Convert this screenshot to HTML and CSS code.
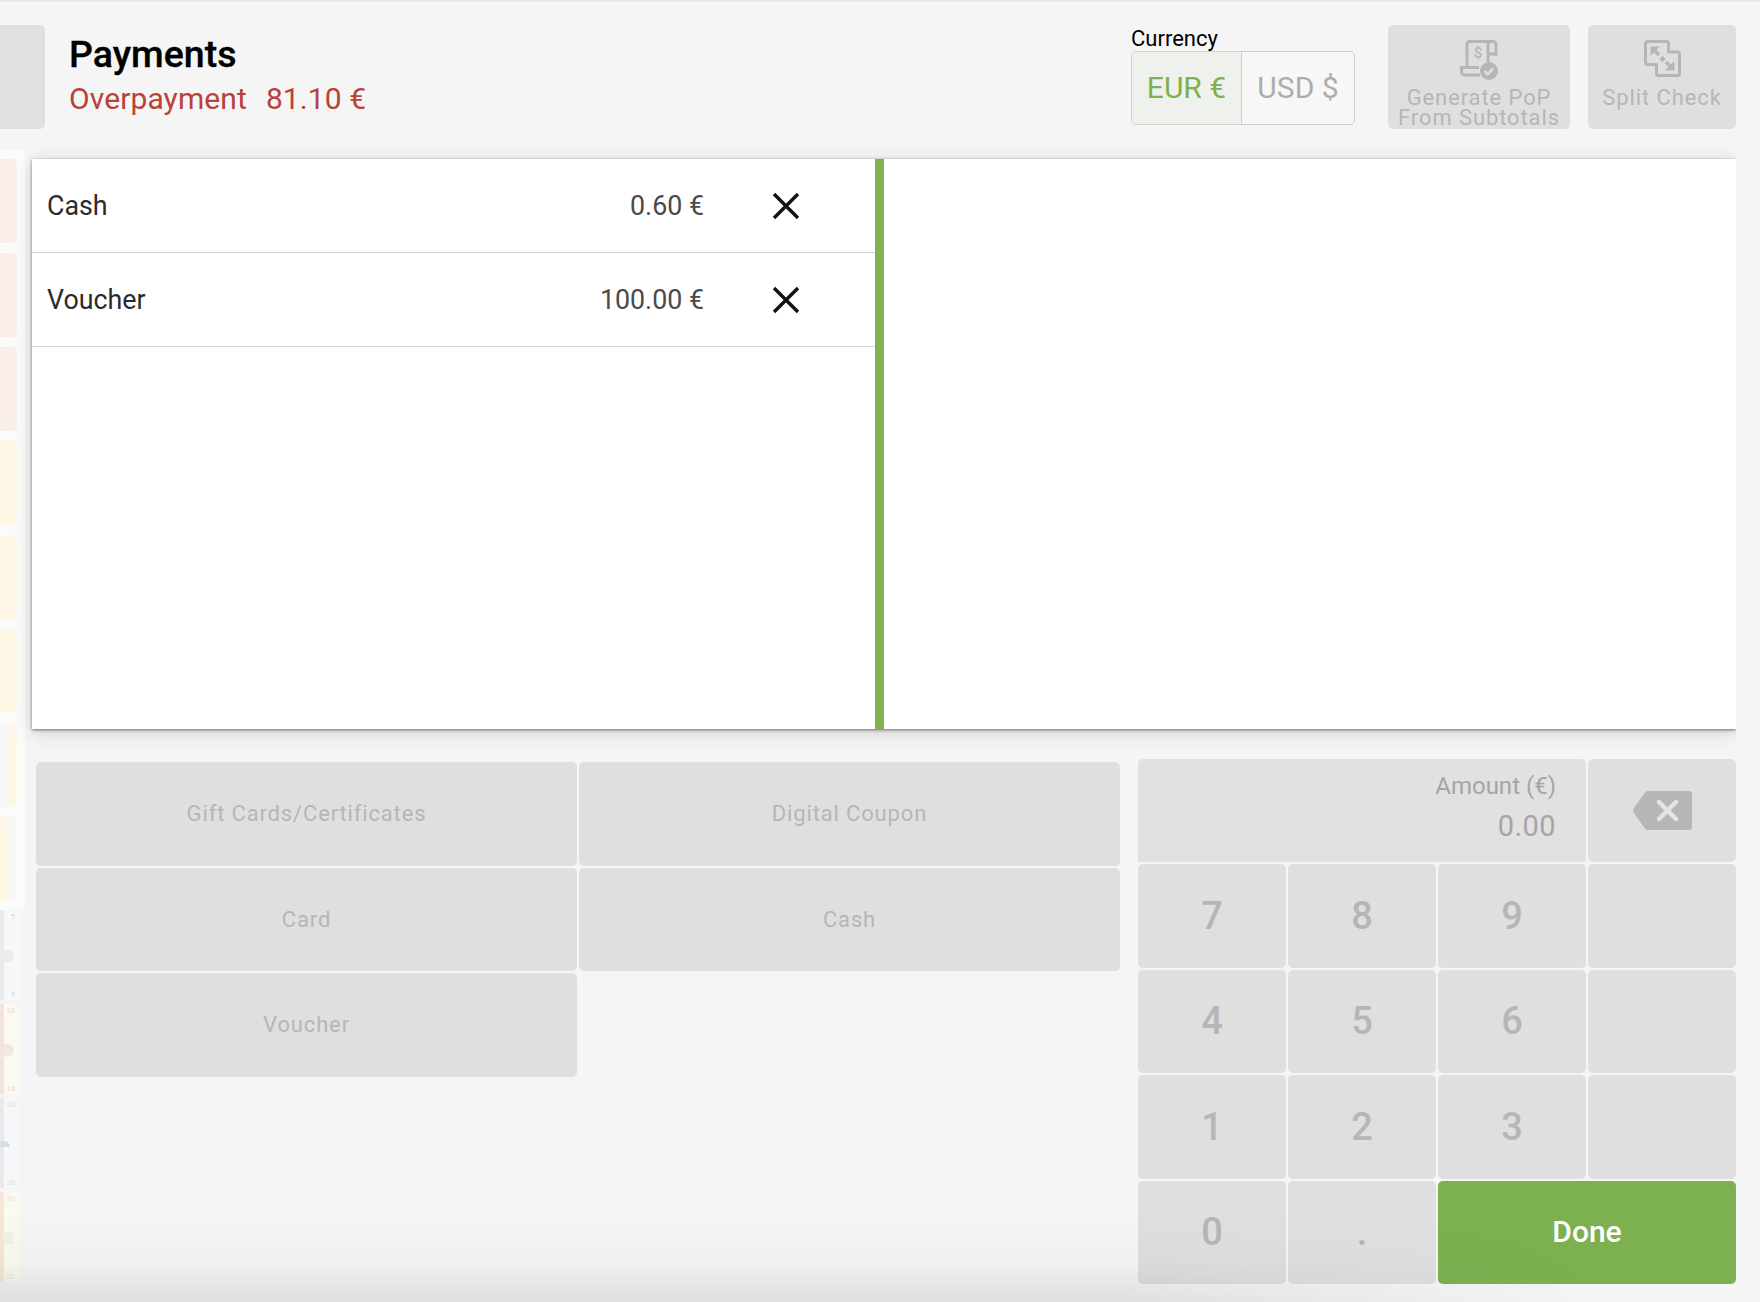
FILE: index.html
```html
<!DOCTYPE html>
<html lang="en">
<head>
<meta charset="utf-8">
<title>Payments</title>
<link rel="stylesheet" href="styles.css">
</head>
<body>
<div class="app">
  <div class="ghost">
    <div class="coins">
      <div class="coin red"></div>
      <div class="coin red"></div>
      <div class="coin red"></div>
      <div class="coin yellow"></div>
      <div class="coin yellow"></div>
      <div class="coin yellow"></div>
      <div class="coin half-a"></div>
      <div class="coin half-b"></div>
    </div>
    <div class="bills">
      <div class="bill bill-5"><span>5</span><i></i><span>5</span></div>
      <div class="bill bill-10"><span>10</span><i></i><span>10</span></div>
      <div class="bill bill-20"><span>20</span><i class="dome"></i><span>20</span></div>
      <div class="bill bill-50"><span>50</span><i class="square"></i><span>50</span></div>
    </div>
  </div>

  <header class="header">
    <div class="back"></div>
    <div class="titles">
      <h1 class="title">Payments</h1>
      <div class="status"><span>Overpayment</span><span>81.10 €</span></div>
    </div>
    <div class="currency">
      <div class="currency-label">Currency</div>
      <div class="currency-group">
        <div class="cur active">EUR €</div>
        <div class="cur">USD $</div>
      </div>
    </div>
    <div class="tool tool-pop">
      <svg class="tool-icon" width="38" height="40" viewBox="0 0 38 40" fill="none" stroke="#b6b6b6" stroke-width="3">
        <path d="M7 26V4a2.500 2.500 0 0 1 2.500-2.500H33a3 3 0 0 1 3 3V14h-8V4.500a3 3 0 0 1 3-3M28 14v8"/>
        <path d="M19 27.500H1.500V32a3 3 0 0 0 3 3H20"/>
        <text class="dollar" x="18" y="18" text-anchor="middle" fill="#b6b6b6" stroke="none">$</text>
        <circle cx="29" cy="31" r="9" fill="#b6b6b6" stroke="none"/>
        <path d="M24.500 31l3.200 3.200 5.800-6" stroke="#dfdfdf" stroke-width="2.500"/>
      </svg>
      <div class="tool-text">Generate PoP<br>From Subtotals</div>
    </div>
    <div class="tool tool-split">
      <svg class="tool-icon" width="37" height="40" viewBox="0 0 37 40" fill="none" stroke="#b6b6b6" stroke-width="3" stroke-linejoin="round">
        <path d="M3.500 1.500H22.500a2 2 0 0 1 2 2V12H33.500a2 2 0 0 1 2 2V33.500a2 2 0 0 1-2 2H14.500a2 2 0 0 1-2-2V24.500H3.500a2 2 0 0 1-2-2V3.500a2 2 0 0 1 2-2z"/>
        <path d="M6.500 6.500h9.500L6.500 16zM30.500 30.500h-9.500L30.500 21z" fill="#b6b6b6" stroke="none"/>
        <path d="M9 9l6 6M28 28l-6-6" stroke-width="3.500"/>
        <path d="M18.500 15.800l3.200 3.200-3.200 3.200-3.200-3.200z" fill="#b6b6b6" stroke="none"/>
      </svg>
      <div class="tool-text">Split Check</div>
    </div>
  </header>

  <section class="panels">
    <div class="list">
      <div class="row">
        <span class="row-name">Cash</span>
        <span class="row-amount">0.60 €</span>
        <svg class="row-x" width="28" height="28" viewBox="0 0 28 28" stroke="#111" stroke-width="3.400" stroke-linecap="butt"><path d="M2 2l24 24M26 2L2 26"/></svg>
      </div>
      <div class="row">
        <span class="row-name">Voucher</span>
        <span class="row-amount">100.00 €</span>
        <svg class="row-x" width="28" height="28" viewBox="0 0 28 28" stroke="#111" stroke-width="3.400" stroke-linecap="butt"><path d="M2 2l24 24M26 2L2 26"/></svg>
      </div>
    </div>
    <div class="divider"></div>
    <div class="detail"></div>
  </section>

  <section class="bottom">
    <div class="methods">
      <div class="btn">Gift Cards/Certificates</div>
      <div class="btn">Digital Coupon</div>
      <div class="btn">Card</div>
      <div class="btn">Cash</div>
      <div class="btn">Voucher</div>
    </div>
    <div class="pad">
      <div class="display">
        <div class="display-label">Amount (€)</div>
        <div class="display-value">0.00</div>
      </div>
      <div class="key">
        <svg width="59" height="39" viewBox="0 0 59 39"><path d="M15 0h41a3 3 0 0 1 3 3v33a3 3 0 0 1-3 3H15a4 4 0 0 1-3.400-2L.6 21.500a4 4 0 0 1 0-4L11.600 2A4 4 0 0 1 15 0z" fill="#b6b6b6"/><path d="M26 11l17 17M43 11L26 28" stroke="#e4e4e4" stroke-width="4.500" stroke-linecap="round"/></svg>
      </div>
      <div class="key">7</div><div class="key">8</div><div class="key">9</div><div class="key"></div>
      <div class="key">4</div><div class="key">5</div><div class="key">6</div><div class="key"></div>
      <div class="key">1</div><div class="key">2</div><div class="key">3</div><div class="key"></div>
      <div class="key">0</div><div class="key">.</div>
      <div class="done">Done</div>
    </div>
  </section>
  <div class="shade"></div>
</div>
</body>
</html>
```

FILE: styles.css
```css
* { box-sizing: border-box; }
html, body { margin: 0; padding: 0; }
body { font-family: Roboto, "Liberation Sans", sans-serif; background: #f5f5f5; }

.app {
  position: relative;
  width: 1760px;
  height: 1302px;
  overflow: hidden;
  background: #f5f5f5;
  box-shadow: inset 0 2px 2px -1px #dedede;
}

/* dimmed content behind the sheet */
.ghost { position: absolute; left: 0; top: 150px; width: 25px; }
.coins {
  display: flex;
  flex-direction: column;
  gap: 10px;
  width: 25px;
  height: 760px;
  padding-top: 9px;
  background: #fbfbfb;
  border-radius: 0 6px 6px 0;
}
.coin { width: 17px; height: 84px; border-radius: 0 5px 5px 0; }
.coin.red { background: #f9eeea; }
.coin.yellow { background: #fef7e6; }
.coin.half-a { background: linear-gradient(to right, #f7f7f7 10px, #fef7e6 10px); }
.coin.half-b { background: linear-gradient(to right, #fef7e6 10px, #f7f7f7 10px); }

.bills { display: flex; flex-direction: column; gap: 4px; width: 19px; }
.bill {
  display: flex;
  flex-direction: column;
  justify-content: space-between;
  align-items: flex-end;
  width: 19px;
  height: 90px;
  padding: 2px 4px 0 0;
  font-size: 8px;
  line-height: 10px;
  color: #dcdcdc;
  background: linear-gradient(to right, #e9eaeb 4px, #f8f8f8 4px);
  border-radius: 0 3px 3px 0;
}
.bill i { width: 13px; height: 13px; margin-right: 1px; border-radius: 50%; background: #ececec; }
.bill-10 { color: #ecd6d0; background: linear-gradient(to right, #f1e3de 4px, #fbf9f1 4px); }
.bill-10 i { background: #f2e8e3; }
.bill-20 { background: linear-gradient(to right, #e8e9ec 4px, #f6f7f8 4px); }
.bill-20 i.dome { height: 6px; border-radius: 6px 6px 0 0; background: #d9dbe5; margin-right: 5px; }
.bill-50 { color: #e9e6d6; background: linear-gradient(to right, #f6e7d8 4px, #fbfaf1 4px); }
.bill-50 i.square { width: 11px; height: 12px; border-radius: 0; background: #f3f2e7; }

/* header */
.header {
  position: relative;
  display: flex;
  align-items: flex-start;
  height: 159px;
  padding: 25px 24px 0 0;
}
.back { width: 45px; height: 104px; background: #e0e0e0; border-radius: 0 5px 5px 0; }
.titles { margin-left: 24px; }
.title { margin: 9px 0 0; font-size: 37.500px; line-height: 40px; font-weight: 500; color: #000; -webkit-text-stroke: .3px #000; }
.status { display: flex; gap: 19px; margin-top: 7px; font-size: 30px; line-height: 36px; color: #b8423a; letter-spacing: .1px; }

.currency { margin-left: auto; margin-top: 2px; width: 224px; }
.currency-label { font-size: 22px; line-height: 24px; color: #000; }
.currency-group {
  display: flex;
  height: 74px;
  border: 1px solid #cfcfcf;
  border-radius: 5px;
  overflow: hidden;
  background: #f7f7f7;
}
.cur { flex: 1; display: flex; align-items: center; justify-content: center; padding-bottom: 2px; font-size: 30px; color: #adadad; }
.cur.active { flex: none; width: 110px; color: #7db150; background: #eff2ec; border-right: 1px solid #cfcfcf; }

.tool {
  display: flex;
  flex-direction: column;
  align-items: center;
  height: 104px;
  padding-top: 15px;
  background: #dfdfdf;
  border-radius: 5px;
  overflow: hidden;
}
.tool-pop { width: 182px; margin-left: 33px; }
.tool-split { width: 148px; margin-left: 18px; }
.tool-icon { flex: none; }
.dollar { font-family: Roboto, sans-serif; font-size: 15px; font-weight: 500; }
.tool-text { margin-top: 8px; font-size: 22px; line-height: 20px; letter-spacing: .9px; color: #b6b6b6; text-align: center; white-space: nowrap; }

/* panels */
.panels {
  display: flex;
  width: 1704px;
  height: 570px;
  margin-left: 32px;
  background: #fff;
  box-shadow: 0 1px 3px rgba(0,0,0,.5), 0 4px 18px rgba(0,0,0,.14);
  clip-path: inset(-30px 0 -30px -30px);
}
.list { width: 843px; }
.row {
  display: flex;
  align-items: center;
  height: 94px;
  padding-left: 15px;
  border-bottom: 1px solid #d4d4d4;
}
.row-name { font-size: 26.800px; color: #2b2b2b; }
.row-amount { margin-left: auto; font-size: 26.800px; color: #4a4a4a; }
.row-x { margin: 0 75px 0 68px; flex: none; }
.divider { width: 9px; background: #80b254; }
.detail { flex: 1; }

/* bottom */
.bottom { display: flex; align-items: flex-start; gap: 18px; margin-top: 30px; padding-left: 36px; }
.methods {
  display: grid;
  grid-template-columns: 541px 541px;
  grid-auto-rows: 103.5px;
  gap: 2px;
  margin-top: 3px;
  width: 1084px;
}
.btn {
  display: flex;
  align-items: center;
  justify-content: center;
  background: #dfdfdf;
  border-radius: 5px;
  font-size: 22px;
  letter-spacing: .85px;
  color: #b6b6b6;
}
.pad {
  display: grid;
  grid-template-columns: repeat(4, 148px);
  grid-template-rows: repeat(5, 103.4px);
  gap: 2px;
}
.display {
  grid-column: span 3;
  padding: 13px 30px 0 0;
  background: #e1e1e1;
  border-radius: 5px 5px 0 0;
  text-align: right;
  color: #a5a5a5;
}
.display-label { font-size: 24px; line-height: 28px; }
.display-value { margin-top: 8px; font-size: 29px; line-height: 36px; letter-spacing: .4px; }
.key {
  display: flex;
  align-items: center;
  justify-content: center;
  background: #dfdfdf;
  border-radius: 5px;
  font-size: 38px;
  font-weight: 500;
  color: #b6b6b6;
}
.done {
  grid-column: span 2;
  display: flex;
  align-items: center;
  justify-content: center;
  padding-bottom: 2px;
  background: #7db150;
  border-radius: 5px;
  font-size: 30px;
  font-weight: 500;
  color: #fff;
}

.shade {
  position: absolute;
  left: 0;
  bottom: 0;
  width: 1600px;
  height: 90px;
  background: linear-gradient(to top, rgba(0,0,0,.085), rgba(0,0,0,.02) 45%, transparent);
  -webkit-mask-image: linear-gradient(to right, #000 70%, transparent);
  mask-image: linear-gradient(to right, #000 70%, transparent);
  pointer-events: none;
}
```
